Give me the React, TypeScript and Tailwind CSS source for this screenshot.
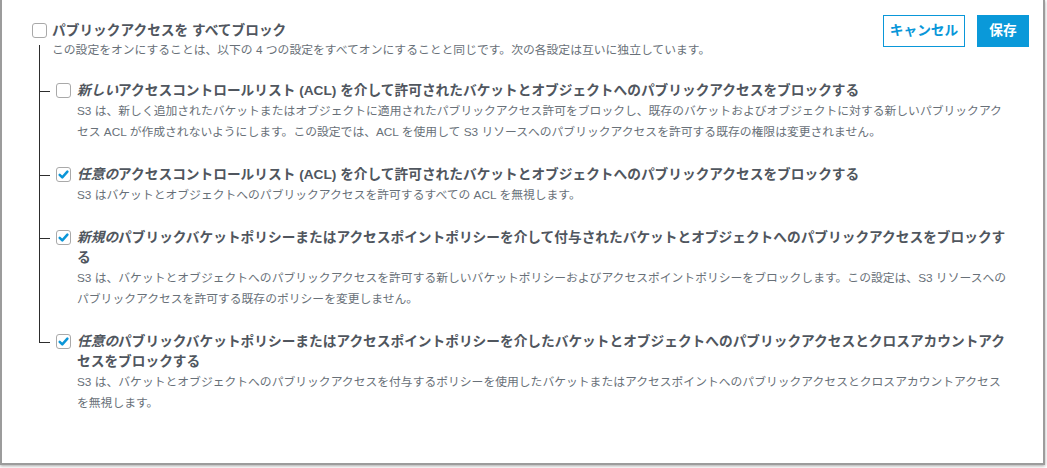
import React from 'react';

type Setting = {
    id: string;
    em: string;
    title: string;
    desc: string;
    checked: boolean;
};

const settings: Setting[] = [
    {
        id: 'new-acl',
        em: '新しい',
        title: 'アクセスコントロールリスト (ACL) を介して許可されたバケットとオブジェクトへのパブリックアクセスをブロックする',
        desc: 'S3 は、新しく追加されたバケットまたはオブジェクトに適用されたパブリックアクセス許可をブロックし、既存のバケットおよびオブジェクトに対する新しいパブリックアクセス ACL が作成されないようにします。この設定では、ACL を使用して S3 リソースへのパブリックアクセスを許可する既存の権限は変更されません。',
        checked: false,
    },
    {
        id: 'any-acl',
        em: '任意の',
        title: 'アクセスコントロールリスト (ACL) を介して許可されたバケットとオブジェクトへのパブリックアクセスをブロックする',
        desc: 'S3 はバケットとオブジェクトへのパブリックアクセスを許可するすべての ACL を無視します。',
        checked: true,
    },
    {
        id: 'new-policy',
        em: '新規の',
        title: 'パブリックバケットポリシーまたはアクセスポイントポリシーを介して付与されたバケットとオブジェクトへのパブリックアクセスをブロックする',
        desc: 'S3 は、バケットとオブジェクトへのパブリックアクセスを許可する新しいバケットポリシーおよびアクセスポイントポリシーをブロックします。この設定は、S3 リソースへのパブリックアクセスを許可する既存のポリシーを変更しません。',
        checked: true,
    },
    {
        id: 'any-policy',
        em: '任意の',
        title: 'パブリックバケットポリシーまたはアクセスポイントポリシーを介したバケットとオブジェクトへのパブリックアクセスとクロスアカウントアクセスをブロックする',
        desc: 'S3 は、バケットとオブジェクトへのパブリックアクセスを付与するポリシーを使用したバケットまたはアクセスポイントへのパブリックアクセスとクロスアカウントアクセスを無視します。',
        checked: true,
    },
];

const Checkbox = ({ checked }: { checked?: boolean }) => (
    <span className="mt-[2px] flex h-[15px] w-[15px] shrink-0 items-center justify-center rounded-[3px] border border-[#a9a9a9] bg-white">
        {checked && (
            <svg viewBox="0 0 13 13" className="h-[13px] w-[13px]">
                <path
                    d="M2.7 6.8 L5.3 9.3 L10.4 3.6"
                    fill="none"
                    stroke="#0b96d8"
                    strokeWidth="2.5"
                    strokeLinecap="round"
                    strokeLinejoin="round"
                />
            </svg>
        )}
    </span>
);

const SettingRow = ({ setting, last }: { setting: Setting; last: boolean }) => (
    <div className="flex">
        {/* ツリーの枝 */}
        {last ? (
            <div className="w-[11px] shrink-0">
                <div className="h-[33px] border-b border-l border-[#2d2d2d]" />
            </div>
        ) : (
            <div className="w-[11px] shrink-0 border-l border-[#2d2d2d]">
                <div className="mt-[32px] h-px bg-[#2d2d2d]" />
            </div>
        )}

        <div className="flex min-w-0 flex-1 gap-[6px] pl-[6px] pt-[22px]">
            <Checkbox checked={setting.checked} />
            <div className="min-w-0 flex-1">
                <p className="text-[13.7px] font-bold leading-[20px] text-[#50565e]">
                    <em className="italic">{setting.em}</em>
                    {setting.title}
                </p>
                <p className="text-[11.8px] leading-[21px] text-[#687078]">{setting.desc}</p>
            </div>
        </div>
    </div>
);

export default function App() {
    return (
        <div className="h-[468px] w-[1047px] overflow-hidden bg-white font-['Liberation_Sans','Noto_Sans_CJK_JP',sans-serif]">
            <div className="h-[465px] w-[1045px] border-b-2 border-l-2 border-r-2 border-[#9c9c9c] bg-white pl-[30px] pr-[14px] pt-[21px] shadow-[0_1px_3px_rgba(0,0,0,0.35)]">
                {/* ヘッダー */}
                <div className="flex h-[20px] items-start justify-between">
                    <label className="flex items-start gap-[5px]">
                        <Checkbox />
                        <span className="text-[13.7px] font-bold leading-[20px] text-[#50565e]">
                            パブリックアクセスを すべてブロック
                        </span>
                    </label>
                    <div className="-mt-[6px] flex gap-[12px]">
                        <button className="h-[32px] w-[82px] border border-[#0a97d9] bg-white text-[13.7px] font-bold text-[#0a97d9]">
                            キャンセル
                        </button>
                        <button className="h-[32px] w-[52px] bg-[#0a99d9] text-[13.7px] font-bold text-white">
                            保存
                        </button>
                    </div>
                </div>

                {/* 設定ツリー */}
                <div className="ml-[7px] pr-[17px]">
                    <div className="flex">
                        <div className="w-[13px] shrink-0 pt-[4px]">
                            <div className="h-full border-l border-[#2d2d2d]" />
                        </div>
                        <p className="text-[11.8px] leading-[18px] text-[#687078]">
                            この設定をオンにすることは、以下の 4 つの設定をすべてオンにすることと同じです。次の各設定は互いに独立しています。
                        </p>
                    </div>

                    {settings.map((setting, i) => (
                        <SettingRow key={setting.id} setting={setting} last={i === settings.length - 1} />
                    ))}
                </div>
            </div>
        </div>
    );
}
